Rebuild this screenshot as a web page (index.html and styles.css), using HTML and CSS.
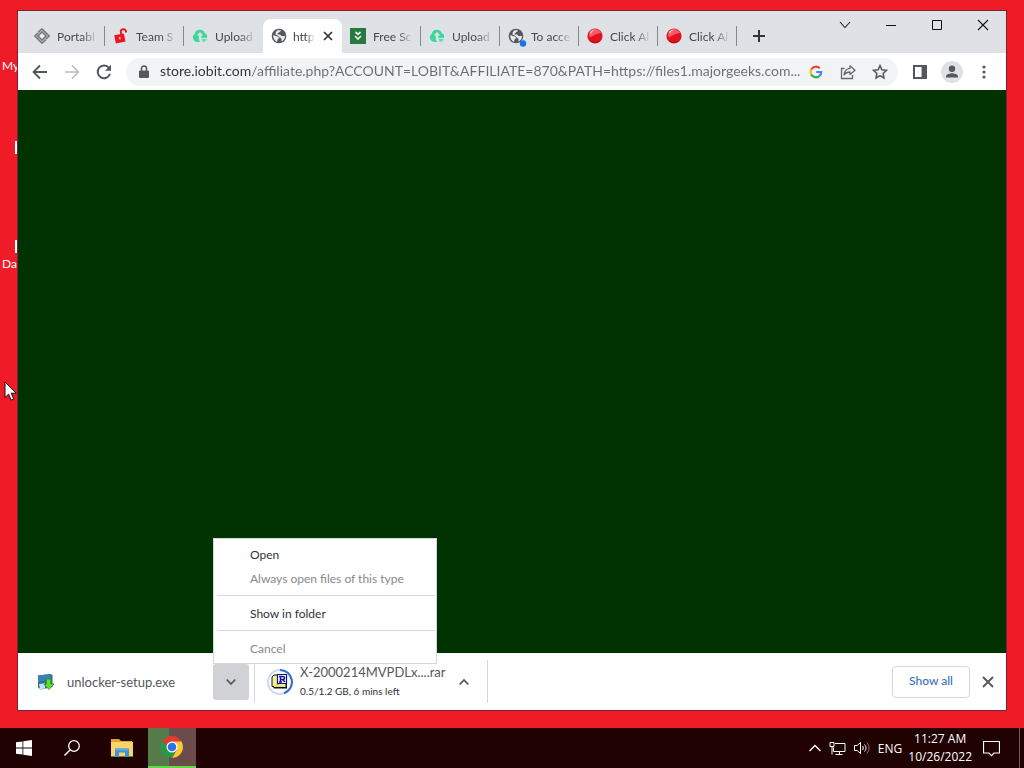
FILE: index.html
```html
<!DOCTYPE html>
<html lang="en">

<head>
    <meta charset="UTF-8">
    <meta name="viewport" content="width=device-width, initial-scale=1.0">
    <title>Desktop</title>
    <link rel="stylesheet" href="styles.css">
</head>

<body>
    <!-- Shared icons -->
    <svg class="sprite" aria-hidden="true">
        <symbol id="globe" viewBox="0 0 16 16">
            <circle cx="8" cy="8" r="7.3" fill="#54585c"/>
            <path d="M2.2 7.2c1.6-.2 2.2.7 3.4 1.1 1.4.3 2.4.5 2.3 1.8-.1 1.1-1.4 1-1.5 2.2l-.2 1.4C3.700 13 2 10.600 2.200 7.200zM6.500 2.300l3.300-.1c.3 1-.6 1.400-1.500 1.700-.9.4-.4 1.300-1.500 1.500-.8.1-.5 1.200.3 1.200 1.600 0 2.200-.3 2.900.9.7 1.200 2 .7 3.900.3.400 2.500-1.200 4.700-3.300 5.700-.2-1.500.2-2.200-.4-3.100-.7-1-2.200-1.100-2.500-2.200C7.300 7.200 4.600 7.600 4.500 6c0-1.700 1-2.700 2-3.700z" fill="#e9ecee"/>
        </symbol>
        <symbol id="upload" viewBox="0 0 16 16">
            <path d="M1 10.500C.3 8 1.700 6.500 2.800 6 3.200 3.200 5.300 1.700 8 1.800c2.600.1 4.300 1.500 4.900 3.700 1.900.5 2.600 2.400 2.100 4.300H9.300V7.500h2L8 4 4.800 7.500h2v4.300l1.400 2C4.400 14.500 2 13.700 1 10.500z" fill="#38d99b"/>
            <path d="M9 10.800l5.800.2c-.7 2.500-2.700 3.400-5 2.900 1-.6 1.300-1.500-.8-3.100z" fill="#5fe0b0"/>
        </symbol>
        <symbol id="ball" viewBox="0 0 16 16">
            <circle cx="8" cy="8" r="7.6" fill="#e0131f"/>
            <path d="M8 .9c3 0 5.300 1.600 6.200 4.100C10 5.200 6.600 7 3.200 9.500 1.500 7.500 1 1.200 8 .9z" fill="#f25c62"/>
            <path d="M3.500 3.500C4.700 2.200 6.400 1.600 8 1.700c-2 .9-3.300 2.300-4.100 4.500-.7-.8-.9-1.700-.4-2.700z" fill="#fbb6b6"/>
            <path d="M3 12c3 2.400 7 2.400 10 0-2.300 4-7.700 4-10 0z" fill="#b80a14"/>
        </symbol>
    </svg>

    <main class="desktop">
        <span class="desktop-label my">My</span>
        <span class="desktop-icon first"></span>
        <span class="desktop-icon second"></span>
        <span class="desktop-label da">Da</span>

        <section class="window">
            <header class="titlebar">
                <nav class="tabs">
                    <div class="tab">
                        <svg class="favicon" viewBox="0 0 16 16"><path d="M8 .5L15.500 8 8 15.500.5 8z" fill="#b4b7ba"/><path d="M8 .8L15.200 8l-3 3M8 15.200L.8 8l3-3M4 8l4-4 4 4-4 4zM4 4.200l4-3.500M12 11.700l-4 3.500" fill="none" stroke="#75797c" stroke-width="1.500"/><path d="M8 5.300L10.700 8 8 10.700 5.300 8z" fill="#eceef0"/></svg>
                        <button class="tab-title">Portabl</button>
                    </div>
                    <div class="tab">
                        <svg class="favicon" viewBox="0 0 16 16"><path d="M1.200 7.200l9.600-1.800 1.700 8.200-9.600 1.800z" fill="#ee1520"/><path d="M8.300 6.300l-.5-2.500C7.600 1 12 .2 12.800 2.800l.3 1.700" fill="none" stroke="#ee1520" stroke-width="1.900"/><path d="M6.500 9l.6 2.700M5.700 10.100l2-.4" stroke="#ffb9b9" stroke-width="1"/></svg>
                        <button class="tab-title">Team S</button>
                    </div>
                    <div class="tab">
                        <svg class="favicon"><use href="#upload"/></svg>
                        <button class="tab-title">Upload</button>
                    </div>
                    <div class="tab active">
                        <svg class="favicon"><use href="#globe"/></svg>
                        <button class="tab-title">http</button>
                        <button class="tab-close" aria-label="Close tab"><svg width="10" height="10" viewBox="0 0 10 10"><path d="M1 1l8 8M9 1L1 9" stroke="#303338" stroke-width="1.700"/></svg></button>
                    </div>
                    <div class="tab">
                        <svg class="favicon" viewBox="0 0 16 16"><path d="M0 0h16v16H0z" fill="#26793f"/><path d="M5.500 4L8 6.300 10.500 4M5 8l3 3 3-3" fill="none" stroke="#e6f3e5" stroke-width="1.700"/></svg>
                        <button class="tab-title">Free Sc</button>
                    </div>
                    <div class="tab">
                        <svg class="favicon"><use href="#upload"/></svg>
                        <button class="tab-title">Upload</button>
                    </div>
                    <div class="tab">
                        <svg class="favicon badged" viewBox="0 0 16 16"><use href="#globe" width="16" height="16"/><circle cx="15" cy="15.500" r="3.200" fill="#1a73e8"/></svg>
                        <button class="tab-title">To acce</button>
                    </div>
                    <div class="tab">
                        <svg class="favicon"><use href="#ball"/></svg>
                        <button class="tab-title">Click Al</button>
                    </div>
                    <div class="tab">
                        <svg class="favicon"><use href="#ball"/></svg>
                        <button class="tab-title">Click Al</button>
                    </div>
                    <button class="new-tab" aria-label="New tab"><svg width="12" height="12" viewBox="0 0 12 12"><path d="M6 0v12M0 6h12" stroke="#303338" stroke-width="2"/></svg></button>
                </nav>
                <div class="window-controls">
                    <button aria-label="Search tabs"><svg width="12" height="12" viewBox="0 0 12 12"><path d="M1 3l5 5.500L11 3" fill="none" stroke="#222" stroke-width="1.100"/></svg></button>
                    <button aria-label="Minimize"><svg width="12" height="12" viewBox="0 0 12 12"><path d="M1 6.500h10" stroke="#111"/></svg></button>
                    <button aria-label="Maximize"><svg width="12" height="12" viewBox="0 0 12 12"><path d="M1.500 1.500h9v9h-9z" fill="none" stroke="#111"/></svg></button>
                    <button aria-label="Close"><svg width="12" height="12" viewBox="0 0 12 12"><path d="M1 1l10 10M11 1L1 11" stroke="#111" stroke-width="1.100"/></svg></button>
                </div>
            </header>

            <div class="toolbar">
                <button class="nav-button" aria-label="Back"><svg width="16" height="16" viewBox="0 0 16 16"><path d="M15 8H2M8 1.500L1.500 8 8 14.500" fill="none" stroke="#54585c" stroke-width="1.800"/></svg></button>
                <button class="nav-button" aria-label="Forward" disabled><svg width="16" height="16" viewBox="0 0 16 16"><path d="M1 8h13M8 1.500L14.500 8 8 14.500" fill="none" stroke="#b9bbbd" stroke-width="1.600"/></svg></button>
                <button class="nav-button" aria-label="Reload"><svg width="16" height="16" viewBox="0 0 16 16"><path d="M13 4A6.300 6.300 0 1 0 14 9.800" fill="none" stroke="#54585c" stroke-width="2"/><path d="M15 .8v6H9z" fill="#54585c"/></svg></button>
                <div class="address">
                    <svg width="10" height="14" viewBox="0 0 10 14"><path d="M1 5.500h8a1 1 0 0 1 1 1V12a1 1 0 0 1-1 1H1a1 1 0 0 1-1-1V6.500a1 1 0 0 1 1-1z" fill="#54585c"/><path d="M2.500 6V3.600a2.500 2.500 0 0 1 5 0V6" fill="none" stroke="#54585c" stroke-width="1.500"/></svg>
                    <input class="url" type="text" aria-label="Address" value="store.iobit.com/affiliate.php?ACCOUNT=LOBIT&amp;AFFILIATE=870&amp;PATH=https://files1.majorgeeks.com...">
                    <button aria-label="Google"><svg width="14" height="14" viewBox="0 0 14 14" fill="none" stroke-width="2.200"><path d="M2.300 4.600A5.200 5.200 0 0 1 10.700 3.300" stroke="#ea4335"/><path d="M2.300 4.600a5.200 5.200 0 0 0 0 4.800" stroke="#fbbc05"/><path d="M2.300 9.400A5.200 5.200 0 0 0 10.400 11" stroke="#34a853"/><path d="M10.400 11A5.200 5.200 0 0 0 12.200 7H7.200" stroke="#4285f4"/></svg></button>
                    <button aria-label="Share"><svg width="16" height="16" viewBox="0 0 16 16" fill="none" stroke="#65696d" stroke-width="1.300"><path d="M4.500 4.500H1.500v10h11V11"/><path d="M10 1.800l5 4.400-5 4.300V8c-3 0-4.500.8-6 3 .3-4 2.500-6.300 6-6.700z" stroke-linejoin="round"/></svg></button>
                    <button aria-label="Bookmark"><svg width="16" height="16" viewBox="0 0 16 16"><path d="M8 1.600l1.900 4.200 4.600.5-3.400 3.100.9 4.600-4-2.400L4 14l.9-4.600L1.500 6.300l4.600-.5z" fill="none" stroke="#54585c" stroke-width="1.500"/></svg></button>
                </div>
                <button class="nav-button" aria-label="Side panel"><svg width="14" height="14" viewBox="0 0 14 14"><path d="M1 1h12v12H1z" fill="none" stroke="#54585c" stroke-width="2"/><path d="M8.500 1H13v12H8.500z" fill="#54585c"/></svg></button>
                <button class="nav-button" aria-label="Profile"><svg width="22" height="22" viewBox="0 0 22 22"><circle cx="11" cy="11" r="11" fill="#dee1e6"/><circle cx="11" cy="7.700" r="3.200" fill="#54585f"/><path d="M5 16.500v-1.300c0-2 4-3 6-3s6 1 6 3v1.300z" fill="#54585f"/></svg></button>
                <button class="nav-button" aria-label="Menu"><svg width="4" height="14" viewBox="0 0 4 14" fill="#54585c"><circle cx="2" cy="2" r="1.600"/><circle cx="2" cy="7" r="1.600"/><circle cx="2" cy="12" r="1.600"/></svg></button>
            </div>

            <div class="page"></div>

            <footer class="downloads">
                <div class="download">
                    <button class="download-file">
                        <svg class="favicon" viewBox="0 0 16 16"><path d="M0 1.500L12.500 0l2 1v12L3 15.500l-3-2z" fill="#2a7096"/><path d="M0 1.500L12.500 0v5.500L0 8z" fill="#3784b0"/><path d="M1 10l6-.7v5.200l-5 .7z" fill="#bfe3ee"/><path d="M8.300 5h4.500v5H16l-5 5.500-5-5h2.300z" fill="#62dc2a" stroke="#2c8d20" stroke-width=".8"/></svg>
                        <span class="name">unlocker-setup.exe</span>
                    </button>
                    <button class="more open" aria-label="Download options"><svg width="10" height="8" viewBox="0 0 10 8"><path d="M.7 1.500L5 6l4.300-4.500" fill="none" stroke="#54585c" stroke-width="1.800"/></svg></button>
                    <div class="menu">
                        <button>Open</button>
                        <button disabled>Always open files of this type</button>
                        <hr>
                        <button>Show in folder</button>
                        <hr>
                        <button disabled>Cancel</button>
                    </div>
                </div>
                <div class="download">
                    <button class="download-file progress">
                        <svg width="26" height="26" viewBox="0 0 26 26"><circle cx="13" cy="13" r="12" fill="none" stroke="#ccd9f1" stroke-width="2"/><path d="M13 1a12 12 0 0 1 4 23.300" fill="none" stroke="#3468d8" stroke-width="2"/><path d="M5 8l2-2h4v11.500H5z" fill="#f4f294" stroke="#111"/><path d="M6 18h12.500v-3H20v4.500H7z" fill="#111"/><path d="M7 15.500h10.500V18H7z" fill="#e5e57c"/><path d="M10.500 5.500h9v9h-9z" fill="#fff" stroke="#101080" stroke-width="1.200"/><path d="M13.500 13V7.500h2.300c2.400 0 2.400 3 0 3h-2M15.500 10.500L18 13M12 13h3M12 7.500h2" fill="none" stroke="#14149c" stroke-width="1.500"/></svg>
                        <span class="details">
                            <span class="name">X-2000214MVPDLx....rar</span>
                            <span class="status">0.5/1.2 GB, 6 mins left</span>
                        </span>
                    </button>
                    <button class="more" aria-label="Download options"><svg width="10" height="8" viewBox="0 0 10 8"><path d="M.7 6.500L5 2l4.300 4.500" fill="none" stroke="#54585c" stroke-width="1.800"/></svg></button>
                </div>
                <button class="show-all">Show all</button>
                <button class="close-shelf" aria-label="Close downloads"><svg width="12" height="12" viewBox="0 0 12 12"><path d="M1 1l10 10M11 1L1 11" stroke="#54585c" stroke-width="1.900"/></svg></button>
            </footer>
        </section>

        <svg class="cursor" width="14" height="21" viewBox="0 0 14 21"><path d="M1 1v15.500l3.600-3.300 2.500 5.900 2.600-1.100-2.500-5.800h5z" fill="#fff" stroke="#111"/></svg>
    </main>

    <footer class="taskbar">
        <button class="task" aria-label="Start"><svg width="16" height="16" viewBox="0 0 16 16" fill="#fff"><path d="M0 2.300l6.500-.9v6.200H0zM7.300 1.300L16 0v7.600H7.300zM0 8.400h6.500v6.200L0 13.700zM7.300 8.400H16V16l-8.700-1.300z"/></svg></button>
        <button class="task" aria-label="Search"><svg width="16" height="16" viewBox="0 0 16 16"><circle cx="10" cy="6" r="5.300" fill="none" stroke="#fff" stroke-width="1.300"/><path d="M6.300 9.700L.5 15.500" stroke="#fff" stroke-width="1.400"/></svg></button>
        <button class="task" aria-label="File Explorer"><svg width="22" height="18" viewBox="0 0 22 18"><path d="M0 0h8l2 2h11v5H0z" fill="#e5a22e"/><path d="M0 3h22v14.500H0z" fill="#fbd469"/><path d="M4 9.500h14V18h-4v-4.500H8V18H4z" fill="#3f93d0"/><path d="M5 9.500h12l1 2H4z" fill="#60abdc"/></svg></button>
        <button class="task running" aria-label="Chrome"><svg width="22" height="22" viewBox="0 0 22 22"><path d="M11 11L1.500 5.500a11 11 0 0 1 19 0z" fill="#e33b2e"/><path d="M11 11h0V5.500h9.500A11 11 0 0 1 11 22l4.800-8.200z" fill="#fcc934"/><path d="M1.500 5.500l4.700 8.300L11 16.500h3.200L11 22A11 11 0 0 1 1.500 5.500z" fill="#249a48"/><circle cx="11" cy="11" r="5.500" fill="#fff"/><circle cx="11" cy="11" r="4.300" fill="#2d72e8"/></svg></button>
        <div class="tray">
            <button aria-label="Hidden icons"><svg width="12" height="8" viewBox="0 0 12 8"><path d="M.5 7L6 1.500 11.500 7" fill="none" stroke="#fff" stroke-width="1.300"/></svg></button>
            <button aria-label="Network"><svg width="17" height="14" viewBox="0 0 17 14" fill="none" stroke="#fff"><path d="M6 2.500h10v8H4.500V6.500M10.500 10.500v3M6.500 13.500h7M1 1.500h4v4H1zM3 5.500v8"/></svg></button>
            <button aria-label="Volume"><svg width="16" height="14" viewBox="0 0 16 14" fill="none" stroke="#fff"><path d="M.5 4.500h2.700L6.500 1.500v11L3.200 9.500H.5zM8.500 5c1 1.300 1 2.700 0 4M10.500 3.500c2 2.200 2 4.800 0 7"/><path d="M12.800 1.500c3 3.500 3 7.500 0 11" stroke="#8d7777"/></svg></button>
            <button class="language">ENG</button>
            <button class="clock"><span>11:27 AM</span><span>10/26/2022</span></button>
            <button class="action" aria-label="Notifications"><svg width="17" height="17" viewBox="0 0 17 17"><path d="M.5 1.500h16v11.500h-5.500l-2.500 2.700L6 13H.5z" fill="none" stroke="#fff" stroke-width="1.200"/></svg></button>
        </div>
    </footer>
</body>

</html>
```
FILE: styles.css
```css
* {
    margin: 0;
    padding: 0;
    box-sizing: border-box;
}

body {
    font-family: Lato, "Open Sans", sans-serif;
    font-size: 12px;
    color: #303338;
    display: flex;
    flex-direction: column;
    height: 100vh;
    overflow: hidden;
}

button {
    font: inherit;
    color: inherit;
    background: none;
    border: none;
    display: flex;
    align-items: center;
    justify-content: center;
    white-space: nowrap;
}

svg {
    display: block;
    flex-shrink: 0;
}

.sprite {
    position: absolute;
    width: 0;
    height: 0;
}

/* Desktop */
.desktop {
    flex: 1;
    position: relative;
    background: #ef1c27;
}

.desktop-label {
    position: absolute;
    left: 2px;
    line-height: 16px;
    color: #fff;
}

.my {
    top: 58px;
}

.da {
    top: 256px;
}

.desktop-icon {
    position: absolute;
    left: 15px;
    width: 3px;
    height: 13px;
    background: #fff;
}

.first {
    top: 141px;
}

.second {
    top: 240px;
}

.cursor {
    position: absolute;
    left: 4px;
    top: 381px;
}

.window {
    position: absolute;
    inset: 10px 17px 17px;
    display: flex;
    flex-direction: column;
    border: 1px solid #7a2233;
    background: #fff;
}

/* Tab strip */
.titlebar {
    display: flex;
    justify-content: space-between;
    height: 42px;
    background: #dee1e6;
}

.tabs {
    display: flex;
    align-items: flex-end;
    padding-left: 8px;
}

.tab {
    display: flex;
    align-items: center;
    gap: 7px;
    width: 79px;
    height: 34px;
    padding: 0 7px 0 8px;
    background: linear-gradient(#85888c, #85888c) right center / 1px 20px no-repeat;
}

.tab:has(+ .active) {
    background: none;
}

.tab.active {
    gap: 6px;
    background: #fff;
    border-radius: 8px 8px 0 0;
}

.favicon {
    width: 16px;
    height: 16px;
}

.badged {
    overflow: visible;
}

.tab-title {
    flex: 1;
    min-width: 0;
    justify-content: flex-start;
    overflow: hidden;
    color: #45494d;
    mask-image: linear-gradient(90deg, #000 60%, transparent);
}

.active .tab-title {
    flex: none;
}

.tab-close {
    width: 16px;
    height: 16px;
    margin-left: auto;
}

.new-tab {
    width: 44px;
    height: 34px;
}

.window-controls {
    display: flex;
}

.window-controls button {
    width: 46px;
    height: 28px;
}

/* Toolbar */
.toolbar {
    display: flex;
    align-items: center;
    height: 37px;
    padding: 0 6px;
    background: #fff;
}

.nav-button {
    width: 32px;
    height: 32px;
}

.address {
    flex: 1;
    min-width: 0;
    display: flex;
    align-items: center;
    height: 28px;
    margin: 0 6px;
    padding-left: 13px;
    padding-right: 2px;
    border-radius: 14px;
    background: #f1f3f4;
}

.address button {
    width: 32px;
    height: 28px;
}

.url {
    flex: 1;
    min-width: 0;
    margin-left: 11px;
    padding-bottom: 2px;
    border: none;
    outline: none;
    font-family: inherit;
    font-size: 14px;
    color: transparent;
    background: linear-gradient(90deg, #303338 92px, #6a6e72 92px);
    background-clip: text;
}

.page {
    flex: 1;
    background: #013201;
}

/* Download shelf */
.downloads {
    display: flex;
    align-items: center;
    height: 57px;
    background: #fff;
}

.download {
    position: relative;
    display: flex;
    align-items: center;
    height: 43px;
    padding-right: 5px;
    border-right: 1px solid #d5d7da;
}

.download-file {
    width: 195px;
    height: 36px;
    padding-left: 20px;
    gap: 13px;
    justify-content: flex-start;
}

.download-file.progress {
    width: 191px;
    padding-left: 12px;
    gap: 7px;
}

.name {
    font-size: 13px;
    line-height: 18px;
    color: #54585c;
}

.details {
    display: flex;
    flex-direction: column;
    align-items: flex-start;
}

.status {
    font-size: 10px;
    line-height: 20px;
}

.more {
    width: 36px;
    height: 36px;
    border-radius: 3px;
}

.more.open {
    background: #d0d2d5;
}

.menu {
    position: absolute;
    left: 195px;
    bottom: 39px;
    width: 224px;
    padding: 4px 0 2px;
    border: 1px solid #d5d7da;
    background: #fff;
}

.menu button {
    width: 100%;
    height: 24px;
    padding: 0 0 2px 36px;
    justify-content: flex-start;
}

.menu button:disabled {
    color: #85888c;
}

.menu hr {
    margin: 4px 1px 6px 3px;
    border: none;
    border-top: 1px solid #d5d7da;
}

.show-all {
    width: 78px;
    height: 32px;
    padding-bottom: 2px;
    margin-left: auto;
    border: 1px solid #d5d7da;
    border-radius: 4px;
    font-weight: 500;
    color: #3a70bd;
}

.close-shelf {
    width: 36px;
    height: 36px;
}

/* Taskbar */
.taskbar {
    display: flex;
    height: 40px;
    background: #200203;
    color: #fff;
    font-family: "Open Sans", sans-serif;
}

.task {
    width: 48px;
    height: 40px;
}

.task:nth-child(3) {
    width: 52px;
}

.running {
    background: linear-gradient(90deg, #557b4b 21px, #6b4c4b 21px);
    border-bottom: 2px solid #5fd948;
}

.tray {
    display: flex;
    margin-left: auto;
    padding-right: 4px;
}

.tray button {
    padding: 0 4px;
}

.tray .clock {
    flex-direction: column;
    line-height: 18px;
    padding: 0 2px;
}

.tray .action {
    width: 46px;
    padding: 0 10px 0 0;
    border-right: 1px solid #75595a;
}
```
